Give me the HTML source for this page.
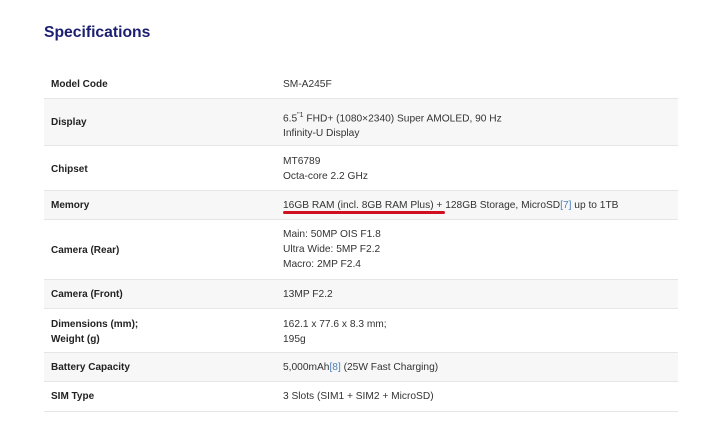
<!DOCTYPE html>
<html><head><style>
body{margin:0;width:720px;height:436px;background:#fff;font-family:"Liberation Sans",sans-serif;position:relative;overflow:hidden}
h1{position:absolute;left:44px;top:24px;margin:0;font-size:15.7px;font-weight:bold;color:#1a1f71}
.r{position:absolute;left:44px;width:634px;border-bottom:1px solid #e6e6e6;box-sizing:border-box}
.g{background:#f7f7f7}
.l{position:absolute;left:7px;font-size:10px;font-weight:bold;color:#222;line-height:15px;margin-top:1px}
.v{position:absolute;left:239px;font-size:10.2px;color:#333;line-height:15px;margin-top:1px}
.v span{color:#4a7fc1}
</style></head><body>
<h1>Specifications</h1>
<div class="r" style="top:66px;height:33px"><div class="l" style="top:10px">Model Code</div><div class="v" style="top:10px">SM-A245F</div></div>
<div class="r g" style="top:99px;height:47px"><div class="l" style="top:15px">Display</div><div class="v" style="top:8px">6.5<sup style="font-size:7px">"1</sup> FHD+ (1080×2340) Super AMOLED, 90 Hz<br>Infinity-U Display</div></div>
<div class="r" style="top:146px;height:45px"><div class="l" style="top:15px">Chipset</div><div class="v" style="top:7px">MT6789<br>Octa-core 2.2 GHz</div></div>
<div class="r g" style="top:191px;height:29px"><div class="l" style="top:6px">Memory</div><div class="v" style="top:6px">16GB RAM (incl. 8GB RAM Plus) + 128GB Storage, MicroSD<span>[7]</span> up to 1TB</div><div style="position:absolute;left:239px;top:20px;width:162px;height:3px;background:#d01020;border-radius:2px"></div></div>
<div class="r" style="top:220px;height:60px"><div class="l" style="top:22px">Camera (Rear)</div><div class="v" style="top:6px">Main: 50MP OIS F1.8<br>Ultra Wide: 5MP F2.2<br>Macro: 2MP F2.4</div></div>
<div class="r g" style="top:280px;height:29px"><div class="l" style="top:6px">Camera (Front)</div><div class="v" style="top:6px">13MP F2.2</div></div>
<div class="r" style="top:309px;height:44px"><div class="l" style="top:7px">Dimensions (mm);<br>Weight (g)</div><div class="v" style="top:7px">162.1 x 77.6 x 8.3 mm;<br>195g</div></div>
<div class="r g" style="top:353px;height:29px"><div class="l" style="top:6px">Battery Capacity</div><div class="v" style="top:6px">5,000mAh<span>[8]</span> (25W Fast Charging)</div></div>
<div class="r" style="top:382px;height:30px"><div class="l" style="top:6px">SIM Type</div><div class="v" style="top:6px">3 Slots (SIM1 + SIM2 + MicroSD)</div></div>
</body></html>
